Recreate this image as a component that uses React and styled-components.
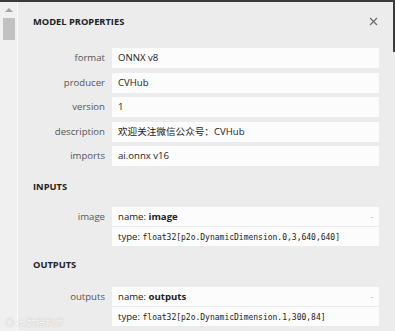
import React from 'react';
import styled, { createGlobalStyle } from 'styled-components';

const Global = createGlobalStyle`
  html, body { margin: 0; padding: 0; background: #ececec; }
  body { font-family: "Open Sans", "Noto Sans", "Noto Sans CJK SC", sans-serif; }
`

const Page = styled.div`position: relative; display: flex; width: 395px; height: 331px; border-top: 2px solid #3b3b3b; box-sizing: border-box; overflow: hidden;`
const Scrollbar = styled.div`width: 17px; border-right: 1px solid #fafafa; background: #f0f0f0; display: flex; flex-direction: column; align-items: center; padding-top: 6px; box-sizing: content-box;`
const Arrow = styled.div`width: 0; height: 0; border-left: 4px solid transparent; border-right: 4px solid transparent; border-bottom: 4px solid #a3a3a3;`
const Thumb = styled.div`width: 12px; height: 22px; margin-top: 6px; background: #c1c1c1;`
const Panel = styled.div`flex: 1; background: #ececec; padding: 0 14px 0 15px; color: #222;`
const Edge = styled.div`width: 2px; display: flex; flex-direction: column;`
const EdgeTop = styled.div`height: 50px; background: #3b3b3b;`
const Header = styled.div`display: flex; align-items: center; justify-content: space-between; height: 38px; margin-bottom: 8px;`
const Title = styled.div`font-size: 9.3px; font-weight: 700; color: #222;`
const Close = styled.div`width: 9px; height: 9px; margin-right: 1px; display: flex;`
const Section = styled.div`font-size: 9.3px; font-weight: 700; color: #222; height: ${p => p.h}px; display: flex; align-items: center; padding-bottom: ${p => p.pb || 0}px; box-sizing: border-box;`
const Grid = styled.div`display: grid; grid-template-columns: 72px 1fr; column-gap: 7px; row-gap: 4.5px;`
const Label = styled.div`text-align: right; font-size: 9.6px; color: #555; line-height: 20px;`
const Value = styled.div`background: #fcfcfc; height: 20px; line-height: 20px; padding: 0 6px; font-size: 9.6px; color: #222; white-space: nowrap;`
const Box = styled.div`background: #fcfcfc; position: relative;`
const Line = styled.div`height: 19px; line-height: 19px; padding: 0 6px; font-size: 9.6px; color: #222; white-space: nowrap; & + & { border-top: 1px solid #ececec; }`
const Mono = styled.span`font-family: "DejaVu Sans Mono", "Liberation Mono", monospace; font-size: 8px;`
const Toggle = styled.span`position: absolute; right: 6px; top: 3px; font-size: 8px; color: #888;`
const Mark = styled.div`position: absolute; left: 5px; bottom: 2px; font-size: 9.5px; color: #fff; opacity: 0.85; text-shadow: 0 0 1px #999; font-family: "Noto Sans CJK SC", sans-serif;`

const props = [
  ['format', 'ONNX v8'],
  ['producer', 'CVHub'],
  ['version', '1'],
  ['description', '欢迎关注微信公众号：CVHub'],
  ['imports', 'ai.onnx v16'],
]

const Arg = ({ label, name, type }) => (
  <Grid>
    <Label>{label}</Label>
    <Box>
      <Line>name: <b>{name}</b></Line>
      <Line>type: <Mono>{type}</Mono></Line>
      <Toggle>-</Toggle>
    </Box>
  </Grid>
)

const App = () => (
  <Page>
    <Global />
    <Scrollbar>
      <Arrow />
      <Thumb />
    </Scrollbar>
    <Panel>
      <Header>
        <Title>MODEL PROPERTIES</Title>
        <Close>
          <svg width="9" height="9" viewBox="0 0 9 9">
            <path d="M1 1L8 8M8 1L1 8" stroke="#6b6b6b" strokeWidth="1.2" />
          </svg>
        </Close>
      </Header>
      <Grid>
        {props.map(([k, v]) => (
          <React.Fragment key={k}>
            <Label>{k}</Label>
            <Value>{v}</Value>
          </React.Fragment>
        ))}
      </Grid>
      <Section h={41}>INPUTS</Section>
      <Arg label="image" name="image" type="float32[p2o.DynamicDimension.0,3,640,640]" />
      <Section h={41} pb={4}>OUTPUTS</Section>
      <Arg label="outputs" name="outputs" type="float32[p2o.DynamicDimension.1,300,84]" />
    </Panel>
    <Edge><EdgeTop /></Edge>
    <Mark>◎ 大数据视界</Mark>
  </Page>
)

export default App;
